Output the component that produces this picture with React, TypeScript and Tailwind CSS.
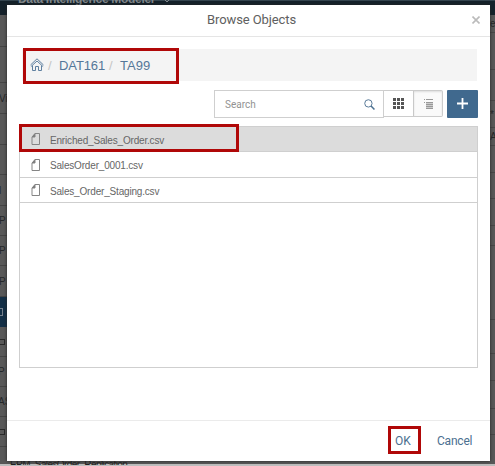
import React from 'react';

const files = ['Enriched_Sales_Order.csv', 'SalesOrder_0001.csv', 'Sales_Order_Staging.csv'];

const leftRows = [
  { h: 'h-[36px]', text: '' },
  { h: 'h-[31px]', text: 'Vie' },
  { h: 'h-[31px]', text: '' },
  { h: 'h-[30px]', text: '' },
  { h: 'h-[31px]', text: 'l' },
  { h: 'h-[30px]', text: 'P' },
  { h: 'h-[30px]', text: 'P' },
  { h: 'h-[31px]', text: 'P' },
];

const leftTail = ['box', 'P', 'AS', 'box'];

const rightRows = [
  { h: 'h-[18px]', text: 'er' },
  { h: 'h-[37px]', text: '' },
  { h: 'h-[31px]', text: '' },
  { h: 'h-[27px]', text: '*' },
  { h: 'h-[18px]', text: 'AD' },
  { h: 'h-[27px]', text: '' },
  { h: 'h-[26px]', text: '' },
  { h: 'h-[27px]', text: '' },
  { h: 'h-[20px]', text: '' },
  { h: 'h-[74px]', text: '' },
  { h: 'h-[34px]', text: '' },
  { h: 'h-[27px]', text: '' },
  { h: 'h-[28px]', text: '' },
  { h: 'h-[26px]', text: '' },
];

function Backdrop() {
  return (
    <div className="flex h-[466px] w-[495px] flex-col overflow-hidden bg-[#585858] text-[10px] text-[#252729]">
      <div className="h-[15px] shrink-0 border-t border-[#34444e] bg-[#15222b] pl-[18px] text-[12px] leading-[10px] font-bold whitespace-nowrap text-[#82888c]">
        <div className="-mt-[7px] flex items-center gap-[9px]">
          <span className="w-[137px] tracking-[-0.3px]">Data Intelligence Modeler</span>
          <svg className="mt-[3px] h-[4px] w-[6px]" viewBox="0 0 6 4" fill="none" stroke="#82888c">
            <path d="m.5.5 2.5 2.5L5.500.5" />
          </svg>
        </div>
      </div>
      <div className="flex h-[449px] shrink-0 justify-between">
        <div className="w-[7px] overflow-hidden">
          <div className="h-[32px] border-b border-[#444]" />
          {leftRows.map((r, i) => (
            <div key={i} className={`${r.h} flex items-center overflow-hidden border-b border-[#444] whitespace-nowrap`}>
              <span className="-ml-[1px]">{r.text}</span>
            </div>
          ))}
          <div className="flex h-[30px] items-center bg-[#132f46]">
            <span className="-ml-[5px] h-[8px] w-[8px] shrink-0 border border-[#76808b]" />
          </div>
          {leftTail.map((t, i) => (
            <div key={i} className="flex h-[30px] items-center border-b border-[#444] whitespace-nowrap">
              {t === 'box' ? <span className="-ml-[2px] h-[6px] w-[7px] shrink-0 border border-[#292929]" /> : <span className="-ml-[2px]">{t}</span>}
            </div>
          ))}
        </div>
        <div className="w-[5px] overflow-hidden">
          {rightRows.map((r, i) => (
            <div key={i} className={`${r.h} flex items-center overflow-hidden border-b border-[#474747]`}>{r.text}</div>
          ))}
        </div>
      </div>
      <div className="h-[2px] shrink-0 bg-[#bdbdbd]" />
    </div>
  );
}

function HomeIcon() {
  return (
    <svg className="mb-[3px] h-[13px] w-[14px]" viewBox="0 0 14 13" fill="none" stroke="#5f80a0" strokeWidth="1">
      <path d="M.5 7 7 .8 13.500 7M2.500 7.500v5h3V8.500h3v4h3v-5M.9 8.600 7 3l6.100 5.600" />
    </svg>
  );
}

function FileIcon() {
  return (
    <svg className="h-[12px] w-[10px] shrink-0" viewBox="0 0 10 12" fill="none" stroke="#858585" strokeWidth="1">
      <path d="M4 .5h4.500v11h-7.500V4z" />
      <path d="M1 4H4V.5" fill="#777" />
    </svg>
  );
}

function Toolbar() {
  return (
    <div className="mt-[9px] mr-[12px] flex h-[28px] shrink-0 justify-end">
      <div className="flex h-[28px] w-[170px] items-center justify-between border border-[#cfcfcf] pr-[8px] pl-[10px]">
        <span className="font-['Roboto',sans-serif] text-[10px] text-[#929292]">Search</span>
        <svg className="h-[11px] w-[11px]" viewBox="0 0 12 12" fill="none" stroke="#4b7090">
          <circle cx="4.8" cy="4.8" r="4" />
          <path d="m7.700 7.700 3.700 3.700" strokeWidth="1.7" />
        </svg>
      </div>
      <div className="flex h-[27px] w-[59px] rounded-r-[2px] border border-l-0 border-[#ccc]">
        <div className="flex w-[30px] items-center justify-center border-r border-[#c9c9c9]">
          <svg className="h-[11px] w-[11px]" viewBox="0 0 11 11" fill="#555">
            {[0, 4, 8].map((y) => [0, 4, 8].map((x) => <rect key={`${x}-${y}`} x={x} y={y} width="3" height="3" />))}
          </svg>
        </div>
        <div className="flex flex-1 items-center justify-center bg-[#fafafa] shadow-[inset_0_1px_2px_#ddd]">
          <svg className="h-[10px] w-[9px]" viewBox="0 0 9 10" stroke="#999" strokeWidth="1">
            <path d="M0 .5h1M0 3.500h1M2 .5h7M2 3.500h7M2 5.500h7M2 7.500h7M2 9.500h7" />
            <path d="M2 4.500h7M2 6.500h7M2 8.500h7" stroke="#ccc" />
          </svg>
        </div>
      </div>
      <div className="ml-[4px] flex h-[28px] w-[31px] items-center justify-center rounded-[1px] bg-[#40698e]">
        <svg className="mb-[1px] h-[11px] w-[11px]" viewBox="0 0 11 11" stroke="#fff" strokeWidth="1.8">
          <path d="M5.500 0v11M0 5.500h11" />
        </svg>
      </div>
    </div>
  );
}

export default function App() {
  return (
    <div className="relative h-[466px] w-[495px] overflow-hidden font-['Liberation_Sans',Arial,sans-serif]">
      <Backdrop />
      <div className="absolute top-[5px] left-[7px] flex h-[456px] w-[483px] flex-col bg-white shadow-[0_0_3px_#222]">
        <header className="flex h-[32px] shrink-0 items-center justify-between border-b border-[#e5e5e5] pr-[10px] pl-[200px]">
          <h1 className="w-[90px] pb-[1px] font-['Roboto',sans-serif] text-[13px] tracking-[-0.1px] whitespace-nowrap text-[#606060]">Browse Objects</h1>
          <svg className="mb-[2px] h-[8px] w-[8px]" viewBox="0 0 8 8" stroke="#bbb" strokeWidth="1.6">
            <path d="m.5.5 7 7M7.500.5l-7 7" />
          </svg>
        </header>
        <nav className="mt-[12px] mr-[13px] ml-[15px] flex h-[32px] shrink-0 items-center bg-[#f4f4f4] pt-[2px] pl-[8px] text-[13px] text-[#557799]">
          <HomeIcon />
          <span className="ml-[4px] w-[11px] text-[#c5c5c5]">/</span>
          <span className="w-[50px] tracking-[-0.1px] whitespace-nowrap">DAT161</span>
          <span className="w-[11px] text-[#c5c5c5]">/</span>
          <span>TA99</span>
        </nav>
        <Toolbar />
        <div className="mt-[8px] ml-[12px] h-[242px] w-[459px] shrink-0 border border-[#cfcfcf]">
          {files.map((name, i) => (
            <div key={name} className={`flex items-center gap-[9px] border-b border-[#cfcfcf] pl-[11px] ${i === 1 ? 'h-[26px]' : 'h-[25px]'} ${i === 0 ? 'bg-[#dcdcdc]' : ''}`}>
              <FileIcon />
              <span className="pt-[3px] text-[10px] leading-[12px] tracking-[-0.18px] text-[#666]">{name}</span>
            </div>
          ))}
        </div>
        <footer className="mt-auto flex h-[41px] shrink-0 items-center border-t border-[#ebebeb] pl-[388px] font-['Roboto',sans-serif] text-[12px] text-[#4b7090]">
          <button className="w-[42px] text-left">OK</button>
          <button className="text-left tracking-[-0.2px]">Cancel</button>
        </footer>
      </div>
      <div className="absolute top-[48px] left-[23px] h-[36px] w-[156px] border-3 border-[#b00808]" />
      <div className="absolute top-[124px] left-[19px] h-[28px] w-[220px] border-3 border-[#b00808]" />
      <div className="absolute top-[426px] left-[388px] h-[28px] w-[33px] border-3 border-[#b00808]" />
      <div className="absolute top-[461px] left-[10px] h-[4px] w-[180px] overflow-hidden text-[10px] leading-[10px] tracking-[-0.6px] text-[#222]">
        <div className="-mt-[1px] w-[118px] whitespace-nowrap">EPM_SalesOrder_Replication</div>
      </div>
    </div>
  );
}
